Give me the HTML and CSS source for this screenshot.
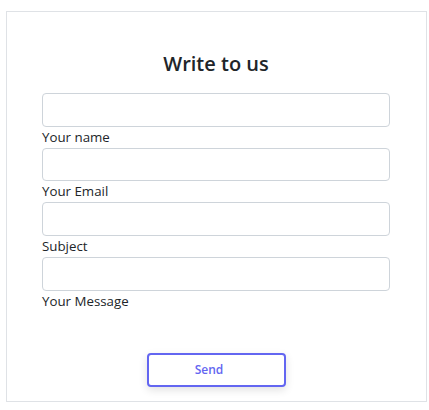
FILE: index.html
```html
<!DOCTYPE html>
<html lang="en">
<head>
<meta charset="utf-8">
<title>Write to us</title>
<link rel="stylesheet" href="styles.css">
</head>
<body>
<form class="card">
  <h1 class="title">Write to us</h1>
  <div class="field">
    <input class="input" type="text" id="name">
    <label class="label" for="name">Your name</label>
  </div>
  <div class="field">
    <input class="input" type="email" id="email">
    <label class="label" for="email">Your Email</label>
  </div>
  <div class="field">
    <input class="input" type="text" id="subject">
    <label class="label" for="subject">Subject</label>
  </div>
  <div class="field">
    <input class="input" type="text" id="message">
    <label class="label" for="message">Your Message</label>
  </div>
  <div class="actions">
    <button class="send" type="button">Send</button>
  </div>
</form>
</body>
</html>
```
FILE: styles.css
```css
html, body {
  margin: 0;
  padding: 0;
  background: #ffffff;
}
body {
  padding: 11px 2px 0 6px;
  font-family: "Open Sans", "Noto Sans", sans-serif;
  color: #212529;
}
.card {
  box-sizing: border-box;
  width: 421px;
  height: 391px;
  border: 1px solid #dfe2e6;
  padding: 0 36px 0 35px;
  display: flex;
  flex-direction: column;
}
.title {
  margin: 38px 0 0;
  font-size: 20px;
  line-height: 27px;
  font-weight: 600;
  text-align: center;
  color: #212529;
  height: 43px;
}
.field {
  display: flex;
  flex-direction: column;
}
.input {
  box-sizing: border-box;
  width: 348px;
  height: 33.67px;
  margin: 0;
  border: 1px solid #ced4da;
  border-radius: 4px;
  background: #fff;
  font: inherit;
}
.label {
  font-size: 13.3px;
  line-height: 21px;
  color: #212529;
}
.actions {
  display: flex;
  justify-content: center;
  padding-top: 41px;
}
.send {
  box-sizing: border-box;
  width: 139px;
  height: 34px;
  padding: 0 14px 0 0;
  border: 2px solid #6366f1;
  border-radius: 4px;
  background: #fff;
  color: #6366f1;
  font-family: inherit;
  font-size: 12px;
  font-weight: 600;
  box-shadow: 0 3px 8px rgba(0, 0, 0, 0.12);
}
```
